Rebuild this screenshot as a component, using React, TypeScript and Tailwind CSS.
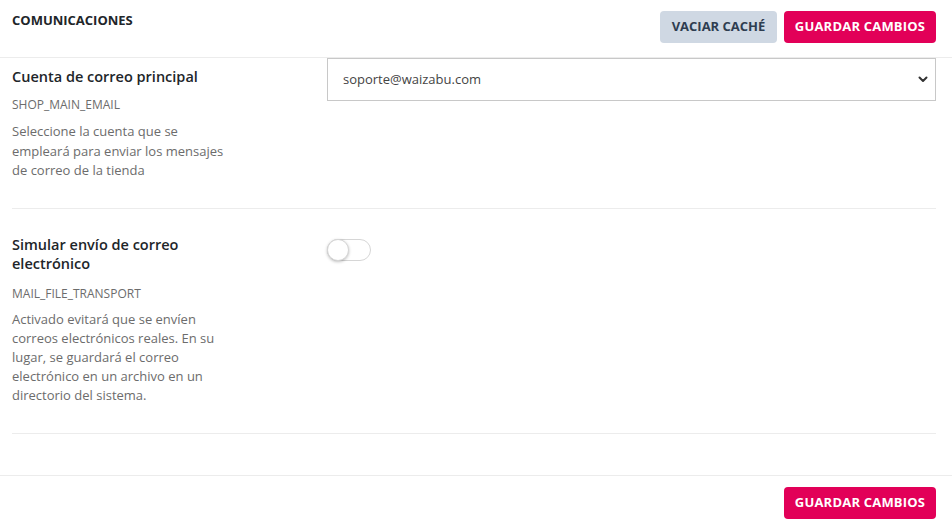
import React from "react";

const Chevron = () => (
  <svg width="10" height="7" viewBox="0 0 10 7" className="shrink-0">
    <path d="M1.5 1.5 L5 5 L8.5 1.5" fill="none" stroke="#333" strokeWidth="2" strokeLinecap="round" strokeLinejoin="round" />
  </svg>
);

export default function App() {
  return (
    <div className="w-[952px] h-[530px] bg-white text-[#212529] flex flex-col" style={{ fontFamily: '"Open Sans", "Noto Sans", sans-serif' }}>
      {/* Header */}
      <div className="h-[58px] border-b border-[#ececec] pl-3 pr-4 pt-[11px] flex justify-between items-start shrink-0">
        <div className="text-[13px] leading-[19px] font-bold text-[#212529]">COMUNICACIONES</div>
        <div className="flex gap-[7px]">
          <button className="h-[32px] w-[117px] rounded-[4px] bg-[#cfd8e3] text-[#2e3d50] text-[13px] font-bold">VACIAR CACHÉ</button>
          <button className="h-[32px] w-[152px] rounded-[4px] bg-[#e20058] text-white text-[13px] font-bold tracking-[0.2px]">GUARDAR CAMBIOS</button>
        </div>
      </div>

      {/* Content */}
      <div className="pl-3 pr-4 flex-1">
        {/* Row 1 */}
        <div className="flex border-b border-[#ececec] pb-[27px]">
          <div className="w-[315px] shrink-0 pt-[9px]">
            <div className="max-w-[225px]">
              <div className="text-[14.5px] leading-[20px] font-semibold text-[#212529]">Cuenta de correo principal</div>
              <div className="mt-[9px] text-[12px] leading-[18px] text-[#6c6c6c]">SHOP_MAIN_EMAIL</div>
              <div className="mt-2 text-[13px] leading-[19.5px] text-[#6c6c6c]">
                Seleccione la cuenta que se empleará para enviar los mensajes de correo de la tienda
              </div>
            </div>
          </div>
          <div className="flex-1">
            <div className="h-[43px] border border-[#c8c8c8] flex items-center justify-between pl-[15px] pr-[7px]">
              <span className="text-[13px] text-[#444]">soporte@waizabu.com</span>
              <Chevron />
            </div>
          </div>
        </div>

        {/* Row 2 */}
        <div className="flex border-b border-[#ececec] pt-[26px] pb-[28px]">
          <div className="w-[315px] shrink-0">
            <div className="max-w-[225px]">
              <div className="text-[14.5px] leading-[19.5px] font-semibold text-[#212529]">Simular envío de correo electrónico</div>
              <div className="mt-[11px] text-[12px] leading-[18px] text-[#6c6c6c]">MAIL_FILE_TRANSPORT</div>
              <div className="mt-[7px] text-[13px] leading-[19px] text-[#6c6c6c]">
                Activado evitará que se envíen correos electrónicos reales. En su lugar, se guardará el correo electrónico en un archivo en un directorio del sistema.
              </div>
            </div>
          </div>
          <div className="flex-1 pt-1">
            <div className="w-[44px] h-[22px] rounded-full border border-[#d6d6d6] bg-white relative">
              <div className="absolute left-[-1px] top-[-1px] w-[22px] h-[22px] rounded-full bg-white border border-[#d6d6d6] shadow-[0_1px_3px_rgba(0,0,0,0.25)]" />
            </div>
          </div>
        </div>
      </div>

      {/* Footer */}
      <div className="h-[55px] border-t border-[#ececec] pr-4 pt-[11px] flex justify-end shrink-0">
        <button className="h-[32px] w-[152px] rounded-[4px] bg-[#e20058] text-white text-[13px] font-bold tracking-[0.2px]">GUARDAR CAMBIOS</button>
      </div>
    </div>
  );
}
